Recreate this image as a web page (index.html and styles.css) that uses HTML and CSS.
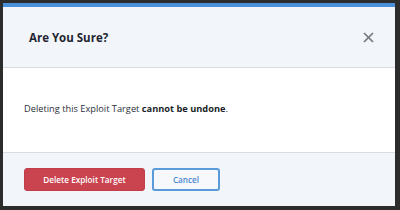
FILE: index.html
```html
<!DOCTYPE html>
<html>
<head>
<meta charset="utf-8">
<link rel="stylesheet" href="styles.css">
</head>
<body>
<div class="modal">
  <div class="modal-header">
    <h2 class="modal-title">Are You Sure?</h2>
    <button class="close" aria-label="Close">
      <svg width="11" height="11" viewBox="0 0 11 11"><path d="M1 1L10 10M10 1L1 10" stroke="#75797e" stroke-width="1.7" stroke-linecap="butt"/></svg>
    </button>
  </div>
  <div class="modal-body">
    <p>Deleting this Exploit Target <strong>cannot be undone</strong>.</p>
  </div>
  <div class="modal-footer">
    <button class="btn btn-danger">Delete Exploit Target</button>
    <button class="btn btn-outline">Cancel</button>
  </div>
</div>
</body>
</html>
```

FILE: styles.css
```css
html, body {
  margin: 0;
  padding: 0;
}
body {
  width: 400px;
  height: 210px;
  background: #2c2c2c;
  padding: 3px 5px 4px 3px;
  box-sizing: border-box;
  font-family: "Open Sans", "Liberation Sans", sans-serif;
}
.modal {
  width: 392px;
  height: 203px;
  display: flex;
  flex-direction: column;
  background: #f2f5fa;
  border-top: 4px solid #4a8fd9;
  box-sizing: border-box;
}
.modal-header {
  height: 61px;
  flex: none;
  box-sizing: border-box;
  border-bottom: 1px solid #d9dde2;
  display: flex;
  align-items: center;
  justify-content: space-between;
  padding: 0 21px 0 26px;
}
.modal-title {
  margin: 0;
  font-size: 11.5px;
  font-weight: 700;
  color: #1f2530;
}
.close {
  background: none;
  border: 0;
  padding: 0;
  width: 11px;
  height: 11px;
  display: flex;
}
.modal-body {
  height: 85px;
  flex: none;
  box-sizing: border-box;
  background: #ffffff;
  border-bottom: 1px solid #d9dde2;
  padding: 34px 21px 0 21px;
}
.modal-body p {
  margin: 0;
  font-size: 9.25px;
  line-height: 13px;
  color: #2a303a;
}
.modal-body strong {
  font-weight: 700;
  color: #1a1f28;
}
.modal-footer {
  flex: 1;
  display: flex;
  align-items: center;
  gap: 7px;
  padding: 0 21px 1px 21px;
}
.btn {
  height: 23px;
  box-sizing: border-box;
  border-radius: 3px;
  font-family: "Open Sans", "Liberation Sans", sans-serif;
  font-size: 8.2px;
  font-weight: 600;
  padding: 0;
}
.btn-danger {
  width: 121px;
  background: #c9444f;
  border: 1px solid #c23d48;
  color: #fff;
}
.btn-outline {
  width: 68px;
  background: #f6f8fc;
  border: 2px solid #5b9ad8;
  color: #4a8ad0;
}
```
